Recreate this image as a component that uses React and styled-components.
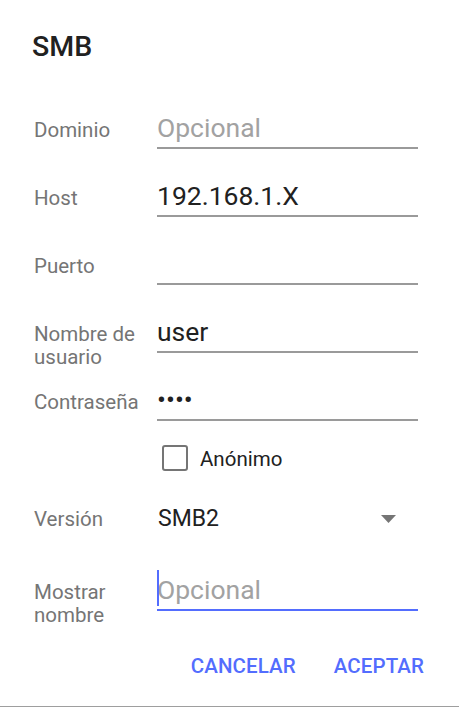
import React from "react";
import styled, { createGlobalStyle } from "styled-components";

const GlobalStyle = createGlobalStyle`
  html, body {
    margin: 0;
    padding: 0;
    background: #fff;
  }
  body {
    font-family: Roboto, "Noto Sans", "Liberation Sans", sans-serif;
    -webkit-font-smoothing: antialiased;
  }
`;

const Dialog = styled.div`
  width: 459px;
  height: 707px;
  box-sizing: border-box;
  background: #fff;
  border-bottom: 1px solid #9e9e9e;
  display: flex;
  flex-direction: column;
`;

const Title = styled.h1`
  margin: 0;
  padding: 31px 32px 0;
  font-size: 28.5px;
  line-height: 32px;
  font-weight: 500;
  color: #212121;
`;

const Form = styled.div`
  height: 559px;
  overflow: hidden;
  padding: 50px 41px 0 34px;
  box-sizing: border-box;
  display: flex;
  flex-direction: column;
`;

const FieldRow = styled.div`
  display: flex;
  align-items: baseline;
  height: ${({ $height }) => $height || "36px"};
  margin-top: ${({ $gap }) => $gap || "0"};
`;

const Label = styled.div`
  flex: 0 0 123px;
  font-size: 20.5px;
  line-height: 23px;
  color: #757575;
`;

const TextBox = styled.div`
  position: relative;
  flex: 1;
  font-size: 26.5px;
  line-height: 30px;
  padding-bottom: 4px;
  color: ${({ $placeholder }) => ($placeholder ? "#a2a2a2" : "#212121")};
  border-bottom: 2px solid ${({ $focused }) => ($focused ? "#536dfe" : "#9a9a9a")};
  min-height: 30px;
  white-space: pre;
`;

const Cursor = styled.span`
  position: absolute;
  left: 0;
  top: -5px;
  width: 2px;
  height: 36px;
  background: #536dfe;
`;

const CheckRow = styled.label`
  display: flex;
  align-items: center;
  height: 48px;
  margin-top: 13px;
  padding-left: 128px;
`;

const Box = styled.span`
  width: 26px;
  height: 26px;
  box-sizing: border-box;
  border: 2.5px solid #757575;
  border-radius: 3px;
`;

const CheckText = styled.span`
  margin-left: 12px;
  padding-top: 2px;
  font-size: 20.5px;
  line-height: 23px;
  color: #212121;
`;

const Spinner = styled.div`
  flex: 1;
  display: flex;
  align-items: center;
  justify-content: space-between;
  padding-right: 22px;
`;

const SpinnerValue = styled.span`
  padding-left: 1px;
  font-size: 23px;
  line-height: 26px;
  color: #212121;
`;

const Actions = styled.div`
  display: flex;
  justify-content: flex-end;
  gap: 38px;
  padding: 20px 35px 0 0;
`;

const Button = styled.button`
  border: none;
  background: none;
  padding: 0;
  font-family: inherit;
  font-size: 20.5px;
  line-height: 48px;
  font-weight: 500;
  letter-spacing: 0.1px;
  color: #536dfe;
`;

function Field({ label, gap, children }) {
  return (
    <FieldRow $gap={gap}>
      <Label>{label}</Label>
      {children}
    </FieldRow>
  );
}

export default function App() {
  return (
    <>
      <GlobalStyle />
      <Dialog>
        <Title>SMB</Title>
        <Form>
          <Field label="Dominio">
            <TextBox $placeholder>Opcional</TextBox>
          </Field>
          <Field label="Host" gap="32px">
            <TextBox>192.168.1.X</TextBox>
          </Field>
          <Field label="Puerto" gap="32px">
            <TextBox>{"\u00a0"}</TextBox>
          </Field>
          <Field label="Nombre de usuario" gap="32px">
            <TextBox>user</TextBox>
          </Field>
          <Field label="Contraseña" gap="32px">
            <TextBox>••••</TextBox>
          </Field>
          <CheckRow>
            <Box />
            <CheckText>Anónimo</CheckText>
          </CheckRow>
          <FieldRow $gap="24px" $height="26px">
            <Label>Versión</Label>
            <Spinner>
              <SpinnerValue>SMB2</SpinnerValue>
              <svg width="15" height="8" viewBox="0 0 15 8">
                <path d="M0 0h15L7.5 8z" fill="#757575" />
              </svg>
            </Spinner>
          </FieldRow>
          <Field label="Mostrar nombre" gap="43px">
            <TextBox $placeholder $focused>
              <Cursor />
              Opcional
            </TextBox>
          </Field>
        </Form>
        <Actions>
          <Button>CANCELAR</Button>
          <Button>ACEPTAR</Button>
        </Actions>
      </Dialog>
    </>
  );
}
